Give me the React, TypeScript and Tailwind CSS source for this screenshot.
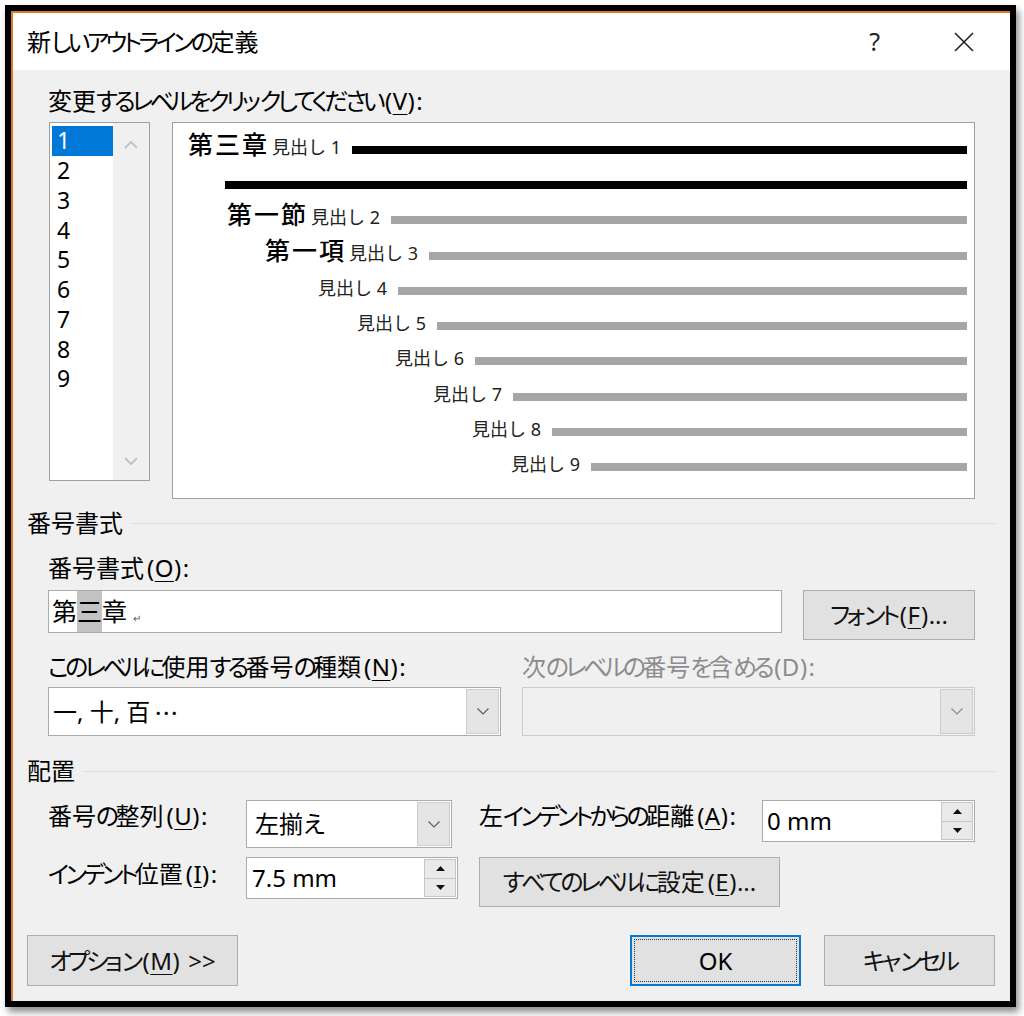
import React from "react";

// Word の「新しいアウトラインの定義」ダイアログ
const ui = "font-['Noto_Sans','Noto_Sans_CJK_JP',sans-serif] [font-feature-settings:'palt']";

const SMALL = "ぁぃぅぇぉっゃゅょァィゥェォッャュョ";

// かなを少し詰めて Yu Gothic UI の字幅に近づける
function J({ t }: { t: string }) {
  return (
    <>
      {Array.from(t).map((c, i) =>
        /[\u3041-\u30ff]/.test(c) ? (
          <span key={i} className={SMALL.includes(c) ? "tracking-[-1px]" : "tracking-[-3.6px]"}>
            {c}
          </span>
        ) : (
          <React.Fragment key={i}>{c}</React.Fragment>
        )
      )}
    </>
  );
}

function U({ children }: { children: React.ReactNode }) {
  return <span className="underline decoration-1 underline-offset-[4px]">{children}</span>;
}

// (X) accelerator
function Key({ k, colon = false, plain = false }: { k: string; colon?: boolean; plain?: boolean }) {
  return (
    <span className="ml-[3px] tracking-[0.5px]">
      ({plain ? k : <U>{k}</U>}){colon && <span className="ml-[1px]">:</span>}
    </span>
  );
}

function Chevron({ color = "#5a5a5a" }: { color?: string }) {
  return (
    <svg width="12" height="7" viewBox="0 0 12 7">
      <polyline points="0.5,0.5 6,6 11.5,0.5" fill="none" stroke={color} strokeWidth="1.1" />
    </svg>
  );
}

function DropButton({ disabled = false }: { disabled?: boolean }) {
  return (
    <div className="w-[33px] my-[1px] mr-[1px] bg-[#e5e5e5] border border-[#cccccc] flex items-center justify-center">
      <Chevron color={disabled ? "#8a8a8a" : "#5a5a5a"} />
    </div>
  );
}

function SpinButtons() {
  return (
    <div className="w-[32px] my-[1px] mr-[1px] flex flex-col">
      <div className="flex-1 bg-[#e9e9e9] border border-[#c6c6c6] flex items-center justify-center">
        <svg width="9" height="5" viewBox="0 0 9 5">
          <polygon points="0,5 4.5,0 9,5" fill="#111" />
        </svg>
      </div>
      <div className="flex-1 bg-[#e9e9e9] border border-t-0 border-[#c6c6c6] flex items-center justify-center">
        <svg width="9" height="5" viewBox="0 0 9 5">
          <polygon points="0,0 9,0 4.5,5" fill="#111" />
        </svg>
      </div>
    </div>
  );
}

function Button({ className = "", children }: { className?: string; children: React.ReactNode }) {
  return (
    <div
      className={
        "bg-[#e1e1e1] border border-[#adadad] flex items-center justify-center text-[24px] text-[#111] " + className
      }
    >
      {children}
    </div>
  );
}

function SectionHead({ title }: { title: string }) {
  return (
    <div className="flex items-center h-[30px] text-[24px] leading-[30px]">
      <span>{title}</span>
      <div className="flex-1 h-px bg-[#dcdcdc] ml-[8px]" />
    </div>
  );
}

const rows = [
  { pl: "pl-[15px]", h: "h-[31px]", big: "第三章", label: "見出し 1", black: true },
  { pl: "pl-[52px]", h: "h-[35px]", black: true },
  { pl: "pl-[54px]", h: "h-[35px]", big: "第一節", label: "見出し 2" },
  { pl: "pl-[92px]", h: "h-[36px]", big: "第一項", label: "見出し 3" },
  { pl: "pl-[145px]", h: "h-[35px]", label: "見出し 4" },
  { pl: "pl-[184px]", h: "h-[35px]", label: "見出し 5" },
  { pl: "pl-[222px]", h: "h-[35px]", label: "見出し 6" },
  { pl: "pl-[260px]", h: "h-[36px]", label: "見出し 7" },
  { pl: "pl-[299px]", h: "h-[35px]", label: "見出し 8" },
  { pl: "pl-[338px]", h: "h-[35px]", label: "見出し 9" },
];

const levels = ["1", "2", "3", "4", "5", "6", "7", "8", "9"];

export default function App() {
  return (
    <div className={"w-[1024px] h-[1016px] bg-white pl-[5px] pt-[5px] text-black " + ui}>
      <div className="w-[1011px] h-[1002px] border-[6px] border-black shadow-[3px_5px_7px_rgba(0,0,0,0.45)] flex">
        <div className="flex-1 flex flex-col border-t-2 border-l-2 border-[#e0782a] bg-[#f0f0f0]">
          {/* title bar */}
          <div className="h-[57px] bg-white flex items-center pl-[14px]">
            <span className="text-[24px] leading-none">
              <J t="新しいアウトラインの定義" />
            </span>
            <span className="ml-auto text-[25px] leading-none text-[#222]">?</span>
            <svg className="ml-[74px] mr-[36px]" width="20" height="20" viewBox="0 0 20 20">
              <path d="M1 1 L19 19 M19 1 L1 19" stroke="#222" strokeWidth="1.6" fill="none" />
            </svg>
          </div>

          {/* body */}
          <div className="flex-1 flex flex-col pl-[14px] pr-[15px]">
            <div className="mt-[16px] ml-[21px] h-[30px] leading-[30px] text-[24px] whitespace-nowrap">
              <J t="変更するレベルをクリックしてください" />
              <Key k="V" colon />
            </div>

            <div className="mt-[6px] ml-[22px] flex items-start">
              {/* level list */}
              <div className="w-[101px] h-[359px] border border-[#a0a0a0] bg-white flex">
                <div className="pl-[2px] pt-[3px] bg-white">
                  {levels.map((l, i) => (
                    <div
                      key={l}
                      className={
                        "w-[61px] h-[29.75px] flex items-center pl-[5px] text-[23px] leading-none " +
                        (i === 0 ? "bg-[#0078d7] text-white" : "text-black")
                      }
                    >
                      {l}
                    </div>
                  ))}
                </div>
                <div className="flex-1 bg-[#f0f0f0] flex flex-col items-center justify-between pt-[18px] pb-[15px]">
                  <svg width="14" height="8" viewBox="0 0 14 8">
                    <polyline points="1,7 7,1 13,7" fill="none" stroke="#c2c2c2" strokeWidth="2" />
                  </svg>
                  <svg width="14" height="8" viewBox="0 0 14 8">
                    <polyline points="1,1 7,7 13,1" fill="none" stroke="#c2c2c2" strokeWidth="2" />
                  </svg>
                </div>
              </div>

              {/* preview */}
              <div className="ml-[22px] w-[803px] h-[377px] border border-[#a0a0a0] bg-white pr-[7px] [font-feature-settings:normal]">
                {rows.map((r, i) => (
                  <div key={i} className={"flex items-end " + r.h + " " + r.pl}>
                    {r.big && (
                      <span className="w-[84px] shrink-0 text-[25px] font-medium leading-none tracking-[2px] mb-[-3px]">
                        {r.big}
                      </span>
                    )}
                    {r.label && (
                      <span className="w-[80px] shrink-0 text-[18px] leading-none whitespace-pre text-[#222] mb-[-2px]">
                        {r.label}
                      </span>
                    )}
                    <div className={"flex-1 h-[8px] " + (r.black ? "bg-black" : "bg-[#a6a6a6]")} />
                  </div>
                ))}
              </div>
            </div>

            {/* 番号書式 */}
            <div className="mt-[9px]">
              <SectionHead title="番号書式" />
            </div>
            <div className="ml-[21px] mr-[20px] flex flex-col">
              <div className="mt-[15px] h-[30px] leading-[30px] text-[24px]">
                番号書式
                <Key k="O" colon />
              </div>
              <div className="mt-[7px] flex items-start">
                <div className="w-[734px] h-[43px] bg-white border border-[#ababab] flex items-stretch pl-[3px] text-[25px] [font-feature-settings:normal]">
                  <span className="flex items-center">第</span>
                  <span className="flex items-center bg-[#c3c3c3]">三</span>
                  <span className="flex items-center">章</span>
                  <span className="self-end mb-[9px] ml-[6px] text-[10px] leading-none text-[#555]">↵</span>
                </div>
                <Button className="ml-auto w-[172px] h-[50px]">
                  <J t="フォント" />
                  <Key k="F" />
                  ...
                </Button>
              </div>

              <div className="mt-[12px] grid grid-cols-2 gap-x-[21px]">
                <div className="h-[30px] leading-[30px] text-[24px] whitespace-nowrap">
                  <J t="このレベルに使用する番号の種類" />
                  <Key k="N" colon />
                </div>
                <div className="h-[30px] leading-[30px] text-[24px] text-[#8c8c8c] whitespace-nowrap">
                  <J t="次のレベルの番号を含める" />
                  <Key k="D" colon plain />
                </div>
                <div className="mt-[5px] h-[49px] bg-white border border-[#ababab] flex">
                  <div className="flex-1 flex items-center pl-[4px] text-[24px]">
                    一, 十, 百 <span className="font-['Noto_Sans_CJK_JP',sans-serif] ml-[4px]">…</span>
                  </div>
                  <DropButton />
                </div>
                <div className="mt-[5px] h-[49px] bg-[#f0f0f0] border border-[#cccccc] flex">
                  <div className="flex-1" />
                  <DropButton disabled />
                </div>
              </div>
            </div>

            {/* 配置 */}
            <div className="mt-[20px]">
              <SectionHead title="配置" />
            </div>
            <div className="ml-[21px] mr-[20px] flex flex-col text-[24px]">
              <div className="mt-[14px] flex items-start">
                <div className="w-[198px] mt-[1px] h-[30px] leading-[30px] whitespace-nowrap">
                  番号<J t="の" />整列
                  <Key k="U" colon />
                </div>
                <div className="w-[206px] h-[48px] bg-white border border-[#ababab] flex">
                  <div className="flex-1 flex items-center pl-[8px]">
                    左揃<J t="え" />
                  </div>
                  <DropButton />
                </div>
                <div className="ml-[27px] w-[283px] mt-[1px] h-[30px] leading-[30px] whitespace-nowrap">
                  <J t="左インデントからの距離" />
                  <Key k="A" colon />
                </div>
                <div className="w-[213px] h-[42px] bg-white border border-[#ababab] flex">
                  <div className="flex-1 flex items-center pl-[4px]">0 mm</div>
                  <SpinButtons />
                </div>
              </div>

              <div className="mt-[9px] flex items-start">
                <div className="w-[198px] mt-[2px] h-[30px] leading-[30px] whitespace-nowrap">
                  <J t="インデント位置" />
                  <Key k="I" colon />
                </div>
                <div className="w-[212px] h-[42px] bg-white border border-[#ababab] flex">
                  <div className="flex-1 flex items-center pl-[5px]">7.5 mm</div>
                  <SpinButtons />
                </div>
                <Button className="ml-[21px] w-[301px] h-[50px]">
                  <J t="すべてのレベルに設定" />
                  <Key k="E" />
                  ...
                </Button>
              </div>
            </div>

            {/* bottom buttons */}
            <div className="mt-[28px] flex">
              <Button className="w-[211px] h-[51px]">
                <J t="オプション" />
                <Key k="M" />
                <span className="ml-[8px]">&gt;&gt;</span>
              </Button>
              <div className="ml-auto w-[171px] h-[51px] bg-[#e1e1e1] border-2 border-[#0078d7] p-[2px]">
                <div className="h-full border border-dotted border-[#333] flex items-center justify-center text-[24px]">
                  OK
                </div>
              </div>
              <Button className="ml-[23px] w-[171px] h-[51px]">
                <J t="キャンセル" />
              </Button>
            </div>
          </div>
        </div>
      </div>
    </div>
  );
}
